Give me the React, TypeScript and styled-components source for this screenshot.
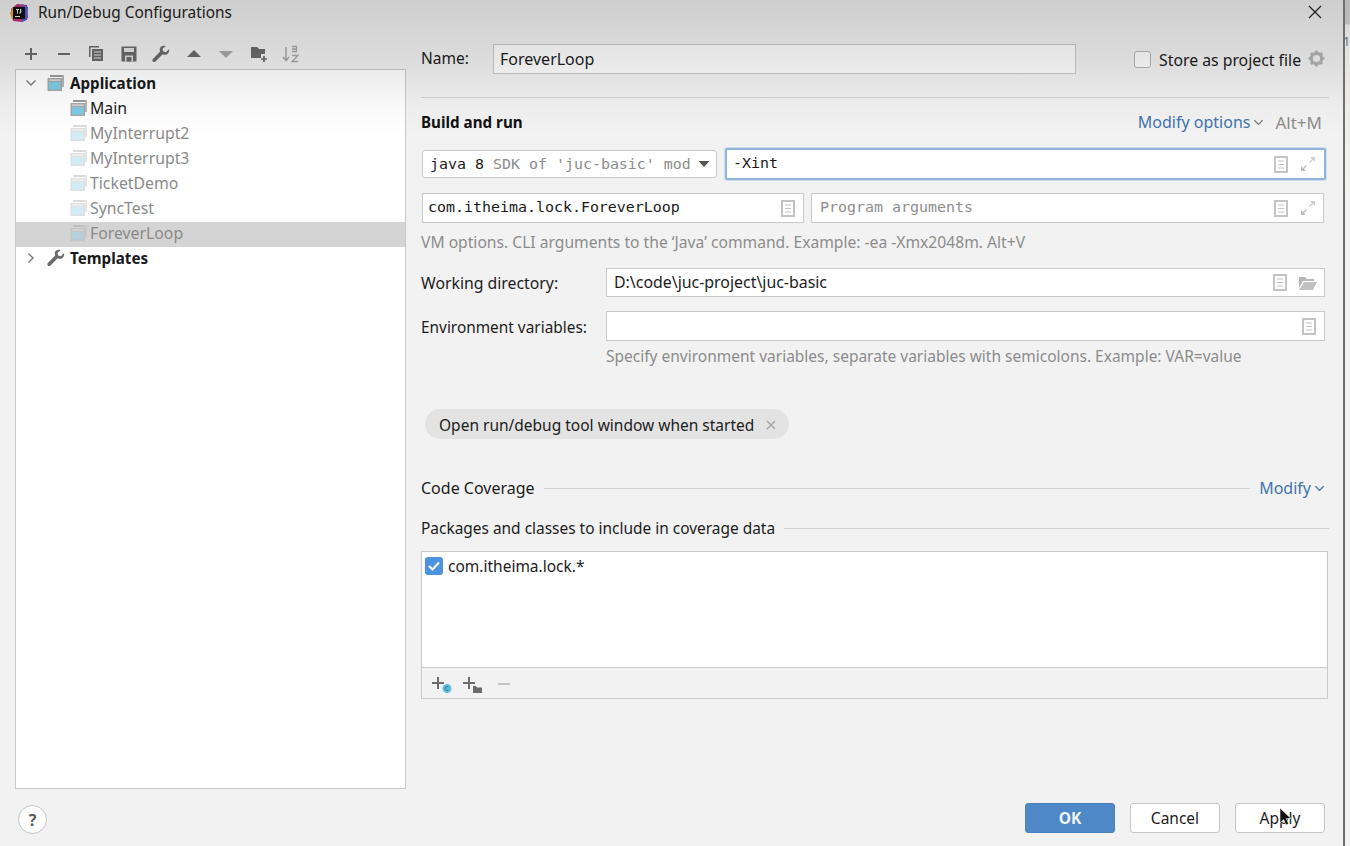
import React from "react";
import styled, { createGlobalStyle } from "styled-components";

const Global = createGlobalStyle`
  html, body { margin: 0; padding: 0; height: 846px; overflow: hidden; background: #f2f2f2; }
  #root { width: 1350px; height: 846px; }
  * { box-sizing: border-box; }
`;

const UI = `"Noto Sans", "Open Sans", "Liberation Sans", sans-serif`;
const MONO = `"DejaVu Sans Mono", "Liberation Mono", monospace`;

const Screen = styled.div`
  position: relative;
  display: flex;
  width: 1350px;
  height: 846px;
  overflow: hidden;
  font-family: ${UI};
  font-size: 15.5px;
  color: #1c1c1c;
`;
const Dialog = styled.div`
  width: 1345px;
  height: 846px;
  background: #f2f2f2;
  border-right: 2px solid #6f6f6f;
  display: flex;
  flex-direction: column;
  flex: none;
`;
const BackStrip = styled.div`
  flex: 1;
  position: relative;
  background: linear-gradient(to bottom, #b9b9b9 0, #bcbcbc 24px, #dcdcdc 25px, #ecebe6 90px, #f4f4f4 200px);
`;
const BackGlyph = styled.span`
  position: absolute;
  left: -2px;
  top: 34px;
  font-size: 12.5px;
  line-height: 16px;
  color: #5f6f80;
`;
const Shade = styled.div`
  position: absolute;
  left: 0;
  top: 0;
  width: 1343px;
  height: 135px;
  pointer-events: none;
  background: linear-gradient(to bottom, rgba(0,0,0,.15) 0, rgba(0,0,0,.09) 60px, rgba(0,0,0,.025) 105px, rgba(0,0,0,0) 135px);
`;
const TitleBar = styled.div`
  height: 26px;
  display: flex;
  align-items: center;
  padding-left: 9px;
  flex: none;
`;
const TitleText = styled.span`
  margin: -2px 0 0 9px;
  font-size: 15.4px;
  color: #222;
  flex: 1;
`;
const CloseBtn = styled.span`
  display: flex;
  margin-right: 21px;
  margin-top: -2px;
`;
const Body = styled.div`
  flex: 1;
  display: flex;
  min-height: 0;
`;
const Left = styled.div`
  width: 406px;
  padding-left: 15px;
  flex: none;
  display: flex;
  flex-direction: column;
`;
const Toolbar = styled.div`
  height: 43px;
  padding-top: 12px;
  display: flex;
  align-items: center;
  flex: none;
`;
const ToolSlot = styled.span`
  width: 32.5px;
  display: flex;
  justify-content: center;
`;
const Tree = styled.div`
  height: 720px;
  width: 391px;
  background: #fff;
  border: 1px solid #c9c9c9;
  padding-top: 2px;
  flex: none;
`;
const TreeRow = styled.div<{ $selected?: boolean; $indent: number; $muted?: boolean; $bold?: boolean }>`
  height: 25px;
  display: flex;
  align-items: center;
  padding: 0 0 4px ${(p) => p.$indent}px;
  background: ${(p) => (p.$selected ? "#d4d4d4" : "transparent")};
  color: ${(p) => (p.$muted ? "#8a8a8a" : "#1a1a1a")};
  font-weight: ${(p) => (p.$bold ? 700 : 400)};
  font-size: ${(p) => (p.$bold ? 15.2 : 15.8)}px;
  white-space: nowrap;
`;
const TreeGlyph = styled.span`
  width: 17px;
  display: flex;
  margin-right: 5px;
`;
const TreeIconSlot = styled.span<{ $muted?: boolean; $gap: number }>`
  display: flex;
  margin-right: ${(p) => p.$gap}px;
  opacity: ${(p) => (p.$muted ? 0.35 : 1)};
`;
const HelpRow = styled.div`
  flex: 1;
  display: flex;
  align-items: flex-start;
  padding: 16px 0 0 3px;
`;
const HelpBtn = styled.button`
  width: 29px;
  height: 29px;
  border-radius: 50%;
  border: 1px solid #c4c4c4;
  background: #fff;
  color: #5a5a5a;
  font: 700 16px ${UI};
  padding: 0;
`;
const Right = styled.div`
  flex: none;
  width: 923px;
  padding: 18px 0 0 15px;
  display: flex;
  flex-direction: column;
`;
const Row = styled.div<{ $h: number; $mt?: number }>`
  display: flex;
  align-items: center;
  height: ${(p) => p.$h}px;
  margin-top: ${(p) => p.$mt ?? 0}px;
  flex: none;
`;
const Label = styled.span<{ $w?: number; $ml?: number; $size?: number; $pb?: number; $pt?: number }>`
  width: ${(p) => (p.$w ? `${p.$w}px` : "auto")};
  margin-left: ${(p) => p.$ml ?? 0}px;
  padding-top: ${(p) => p.$pt ?? 0}px;
  padding-bottom: ${(p) => p.$pb ?? 2}px;
  flex: none;
  white-space: nowrap;
  font-size: ${(p) => p.$size ?? 15.5}px;
`;
const Field = styled.div<{ $w: number; $pl?: number }>`
  width: ${(p) => p.$w}px;
  height: 100%;
  border: 1px solid #c8c8c8;
  background: #fff;
  display: flex;
  align-items: center;
  padding: 0 7px 0 ${(p) => p.$pl ?? 7}px;
  flex: none;
`;
const FieldText = styled.span<{ $size?: number }>`
  flex: 1;
  padding-bottom: 1px;
  white-space: nowrap;
  overflow: hidden;
  font-size: ${(p) => p.$size ?? 15.5}px;
`;
const Mono = styled.span<{ $placeholder?: boolean }>`
  flex: 1;
  padding-bottom: 2px;
  font-family: ${MONO};
  font-size: 14.95px;
  color: ${(p) => (p.$placeholder ? "#8e8e8e" : "#1a1a1a")};
  white-space: nowrap;
`;
const SelectBox = styled.div`
  width: 295px;
  height: 28px;
  border: 1px solid #c8c8c8;
  border-radius: 3px;
  background: #fff;
  display: flex;
  align-items: center;
  padding: 0 6px 0 7px;
  font-family: ${MONO};
  font-size: 14.95px;
  flex: none;
  white-space: nowrap;
  overflow: hidden;
`;
const Muted = styled.span`
  color: #8c8c8c;
  margin-left: 9px;
  flex: 1;
`;
const FocusField = styled.div`
  width: 601px;
  height: 32px;
  margin-left: 8px;
  border: 2px solid #8fb4dd;
  box-shadow: 0 0 0 1px #cfdeef;
  border-radius: 2px;
  background: #fff;
  display: flex;
  align-items: center;
  padding: 0 8px 0 6px;
  flex: none;
`;
const IconGap = styled.span`
  display: flex;
  margin-left: 11px;
`;
const Spacer = styled.span<{ $w: number }>`
  width: ${(p) => p.$w}px;
  flex: none;
`;
const CheckEmpty = styled.span`
  width: 17px;
  height: 17px;
  border: 1px solid #b5b5b5;
  border-radius: 3px;
  background: #fff;
  flex: none;
`;
const Divider = styled.div`
  height: 1px;
  background: #d2d2d2;
  margin-top: 23px;
  flex: none;
`;
const Section = styled.span`
  font-weight: 700;
  font-size: 15.2px;
  color: #111;
  flex: 1;
`;
const LinkText = styled.span`
  color: #3f74ad;
  font-size: 16px;
  white-space: nowrap;
`;
const Shortcut = styled.span`
  color: #8c8c8c;
  font-size: 17px;
  margin-left: 11px;
  margin-right: 7px;
`;
const Hint = styled.div<{ $ml?: number; $mt: number; $size: number }>`
  color: #8c8c8c;
  font-size: ${(p) => p.$size}px;
  line-height: 20px;
  height: 20px;
  margin-left: ${(p) => p.$ml ?? 0}px;
  margin-top: ${(p) => p.$mt}px;
  white-space: nowrap;
  flex: none;
`;
const Chip = styled.div`
  width: 364px;
  height: 30px;
  margin: 43px 0 0 4px;
  border-radius: 15px;
  background: #e3e3e3;
  display: flex;
  align-items: center;
  padding: 1px 13px 0 14px;
  justify-content: space-between;
  flex: none;
  font-size: 15.5px;
`;
const Titled = styled.div<{ $mt: number; $pr?: number }>`
  display: flex;
  align-items: center;
  height: 20px;
  margin-top: ${(p) => p.$mt}px;
  padding-right: ${(p) => p.$pr ?? 0}px;
  flex: none;
  white-space: nowrap;
`;
const TitledName = styled.span<{ $size: number }>`
  font-size: ${(p) => p.$size}px;
`;
const TitledLine = styled.span`
  flex: 1;
  height: 1px;
  background: #d2d2d2;
  margin: 0 9px;
`;
const TitledLineEnd = styled(TitledLine)`
  margin-right: 0;
`;
const ListBox = styled.div`
  margin-top: 13px;
  height: 148px;
  width: 907px;
  border: 1px solid #c9c9c9;
  display: flex;
  flex-direction: column;
  flex: none;
`;
const ListArea = styled.div`
  height: 116px;
  background: #fff;
  border-bottom: 1px solid #c9c9c9;
  padding: 4px 0 0 3px;
  flex: none;
`;
const ListItem = styled.div`
  display: flex;
  align-items: center;
  height: 20px;
  gap: 5px;
  font-size: 15.5px;
`;
const CheckOn = styled.span`
  width: 18px;
  height: 18px;
  border-radius: 3px;
  background: #4d94de;
  display: flex;
  align-items: center;
  justify-content: center;
  flex: none;
`;
const ListTools = styled.div`
  flex: 1;
  display: flex;
  align-items: center;
  padding: 4px 0 0 9px;
  gap: 9px;
`;
const MinusIcon = styled.svg`
  margin-left: 4px;
`;
const Buttons = styled.div`
  margin-top: 104px;
  padding-right: 4px;
  display: flex;
  justify-content: flex-end;
  gap: 15px;
  flex: none;
`;
const Btn = styled.button<{ $primary?: boolean }>`
  width: 90px;
  height: 30px;
  border-radius: 3px;
  border: 1px solid ${(p) => (p.$primary ? "#4a82bd" : "#c6c6c6")};
  background: ${(p) => (p.$primary ? "#4f88c7" : "#fff")};
  color: ${(p) => (p.$primary ? "#f0f5fb" : "#1c1c1c")};
  font: ${(p) => (p.$primary ? 700 : 400)} 15.5px ${UI};
  padding: 0;
`;
const Cursor = styled.svg`
  position: absolute;
  left: 1279px;
  top: 807px;
`;

const C = "#6b6b6b";
const Tool = ({ children, w = 18, h = 18 }: { children: React.ReactNode; w?: number; h?: number }) => (
  <svg width={w} height={h} viewBox={`0 0 ${w} ${h}`}>{children}</svg>
);

const AppIcon = () => (
  <svg width="18" height="18" viewBox="0 0 18 18">
    <rect x="3" y="1" width="14" height="2" fill="#9a9a9a" />
    <rect x="15" y="1" width="2" height="12" fill="#b5b5b5" />
    <rect x="0.5" y="4" width="14.5" height="13" fill="#a8a8a8" />
    <rect x="2" y="8" width="11.5" height="7.5" fill="#7dcbe6" />
    <rect x="2" y="5.5" width="11.5" height="1.2" fill="#e4e4e4" />
  </svg>
);
const Doc = () => (
  <svg width="15" height="17" viewBox="0 0 15 17">
    <rect x="1" y="1" width="12" height="15" fill="#fff" stroke="#c4c4c4" strokeWidth="2" />
    <path d="M4 5h6M4 8.5h6M4 12h6" stroke="#c4c4c4" strokeWidth="1.2" />
  </svg>
);
const Expand = () => (
  <svg width="16" height="16" viewBox="0 0 16 16" fill="none">
    <path d="M10 1h5v5l-2-2-3 3-1-1 3-3z" fill="#cfcfcf" />
    <path d="M1 10v5h5l-2-2 3-3-1-1-3 3z" fill="#bdbdbd" />
  </svg>
);
const Wrench = () => (
  <svg width="18" height="18" viewBox="0 0 18 18">
    <path d="M17 4.2l-3.2 3-2.6-.7-.7-2.6L13.6.9c-2.2-.7-4.6 0-5.5 1.9-.6 1.3-.5 2.7.1 3.8L.9 13.9c-.8.8-.7 1.9 0 2.6.8.8 1.9.7 2.6 0l7.2-7.2c1.2.7 2.7.7 4 .1 1.9-1 2.9-3 2.3-5.2z" fill={C} />
  </svg>
);
const Chevron = ({ dir, color = "#7a7a7a", size = 12 }: { dir: "down" | "right"; color?: string; size?: number }) => (
  <svg width={size} height={size} viewBox="0 0 12 12" fill="none">
    <path d={dir === "down" ? "M1.5 3.5L6 8l4.5-4.5" : "M3.5 1.5L8 6l-4.5 4.5"} stroke={color} strokeWidth="1.4" />
  </svg>
);

export default function App() {
  return (
    <Screen>
      <Global />
      <Dialog>
        <TitleBar>
          <svg width="20" height="20" viewBox="0 0 20 20">
            <path d="M2 6L8 1l10 1 1 13-6 4-9-1z" fill="#c2307e" />
            <path d="M1 10l3-6 3 12-4 0z" fill="#f0a030" />
            <path d="M13 1l6 3-1 13-5 2z" fill="#5a5fd8" />
            <rect x="4" y="4" width="12" height="12" fill="#111" />
            <rect x="6" y="13" width="5" height="1" fill="#eee" />
            <path d="M7 6h3v1H9v3.6H8V7H7zM11 6h1.2v3.6c0 .9-1.4 1.1-2.2.6l.4-.8c.3.2.6.2.6-.1z" fill="#eee" />
          </svg>
          <TitleText>Run/Debug Configurations</TitleText>
          <CloseBtn>
            <svg width="14" height="14" viewBox="0 0 14 14">
              <path d="M1 1l12 12M13 1L1 13" stroke="#222" strokeWidth="1.2" />
            </svg>
          </CloseBtn>
        </TitleBar>
        <Body>
          <Left>
            <Toolbar>
              <ToolSlot><Tool w={14} h={14}><path d="M1 7h12M7 1v12" stroke={C} strokeWidth="2" /></Tool></ToolSlot>
              <ToolSlot><Tool w={14} h={14}><path d="M1 7h12" stroke={C} strokeWidth="2" /></Tool></ToolSlot>
              <ToolSlot>
                <Tool w={16} h={17}>
                  <path d="M1 1h10v1.6H2.5V12H1z" fill={C} />
                  <rect x="4" y="4" width="11" height="12" fill={C} />
                  <path d="M6 7h7M6 10h7M6 13h7" stroke="#e8e8e8" strokeWidth="1" />
                </Tool>
              </ToolSlot>
              <ToolSlot>
                <Tool w={16} h={16}>
                  <path d="M0.5 0.5h15v15H0.5z" fill={C} />
                  <rect x="3" y="2" width="10" height="4" fill="#e4e4e4" />
                  <rect x="4" y="9.5" width="8" height="6" fill="#e4e4e4" />
                  <rect x="5.5" y="11" width="5" height="4.5" fill={C} />
                </Tool>
              </ToolSlot>
              <ToolSlot><Wrench /></ToolSlot>
              <ToolSlot><Tool w={16} h={10}><path d="M8 1l7 7H1z" fill={C} /></Tool></ToolSlot>
              <ToolSlot><Tool w={16} h={10}><path d="M1 2h14L8 9z" fill="#a8a8a8" /></Tool></ToolSlot>
              <ToolSlot>
                <Tool w={18} h={17}>
                  <path d="M1 2h6l2 2h6v5h-4v4H1z" fill={C} />
                  <path d="M11 14h6M14 11v6" stroke={C} strokeWidth="1.7" />
                </Tool>
              </ToolSlot>
              <ToolSlot>
                <Tool w={18} h={18}>
                  <path d="M4 2v13M1 12l3 3.5L7 12" stroke="#a8a8a8" strokeWidth="1.5" fill="none" />
                  <path d="M10 1.5h4.5V7M10 4h4.5M10 6.5h4.5M10 10.5h6l-6 6h6" stroke="#a8a8a8" strokeWidth="1.3" fill="none" />
                </Tool>
              </ToolSlot>
            </Toolbar>
            <Tree>
              <TreeRow $indent={9} $bold>
                <TreeGlyph><Chevron dir="down" /></TreeGlyph>
                <TreeIconSlot $gap={5}><AppIcon /></TreeIconSlot>
                Application
              </TreeRow>
              <TreeRow $indent={54}>
                <TreeIconSlot $gap={2}><AppIcon /></TreeIconSlot>
                Main
              </TreeRow>
              {["MyInterrupt2", "MyInterrupt3", "TicketDemo", "SyncTest"].map((n) => (
                <TreeRow key={n} $indent={54} $muted>
                  <TreeIconSlot $muted $gap={2}><AppIcon /></TreeIconSlot>
                  {n}
                </TreeRow>
              ))}
              <TreeRow $indent={54} $muted $selected>
                <TreeIconSlot $muted $gap={2}><AppIcon /></TreeIconSlot>
                ForeverLoop
              </TreeRow>
              <TreeRow $indent={9} $bold>
                <TreeGlyph><Chevron dir="right" /></TreeGlyph>
                <TreeIconSlot $gap={5}><Wrench /></TreeIconSlot>
                Templates
              </TreeRow>
            </Tree>
            <HelpRow><HelpBtn>?</HelpBtn></HelpRow>
          </Left>
          <Right>
            <Row $h={30}>
              <Label $w={72}>Name:</Label>
              <Field $w={583} $pl={6}><FieldText $size={16}>ForeverLoop</FieldText></Field>
              <Spacer $w={58} />
              <CheckEmpty />
              <Label $ml={8} $size={15.8} $pb={0} $pt={2}>Store as project file</Label>
              <Spacer $w={7} />
              <svg width="18" height="18" viewBox="0 0 18 18">
                <circle cx="8.5" cy="8.5" r="5.2" fill="none" stroke="#b4b4b4" strokeWidth="3.2" />
                <path d="M8.5 0.5v3M8.5 13.5v3M0.5 8.5h3M13.5 8.5h3M2.8 2.8l2.1 2.1M12.1 12.1l2.1 2.1M14.2 2.8l-2.1 2.1M4.9 12.1l-2.1 2.1" stroke="#b4b4b4" strokeWidth="2.6" />
              </svg>
            </Row>
            <Divider />
            <Row $h={20} $mt={14}>
              <Section>Build and run</Section>
              <LinkText>Modify options</LinkText>
              <Spacer $w={3} />
              <Chevron dir="down" size={11} />
              <Shortcut>Alt+M</Shortcut>
            </Row>
            <Row $h={32} $mt={16}>
              <Spacer $w={1} />
              <SelectBox>
                java 8<Muted>SDK of 'juc-basic' mod</Muted>
                <svg width="12" height="8" viewBox="0 0 12 8"><path d="M0.5 1h11L6 7z" fill="#555" /></svg>
              </SelectBox>
              <FocusField>
                <Mono>-Xint</Mono>
                <Doc />
                <IconGap><Expand /></IconGap>
              </FocusField>
            </Row>
            <Row $h={30} $mt={13}>
              <Spacer $w={1} />
              <Field $w={382} $pl={5}>
                <Mono>com.itheima.lock.ForeverLoop</Mono>
                <Doc />
              </Field>
              <Spacer $w={7} />
              <Field $w={513} $pl={8}>
                <Mono $placeholder>Program arguments</Mono>
                <Doc />
                <IconGap><Expand /></IconGap>
              </Field>
            </Row>
            <Hint $mt={9} $size={15.65}>VM options. CLI arguments to the ‘Java’ command. Example: -ea -Xmx2048m. Alt+V</Hint>
            <Row $h={29} $mt={16}>
              <Label $w={185} $size={15.8} $pb={0}>Working directory:</Label>
              <Field $w={719}>
                <FieldText $size={15.9}>D:\code\juc-project\juc-basic</FieldText>
                <Doc />
                <IconGap>
                  <svg width="18" height="14" viewBox="0 0 18 14">
                    <path d="M0 1h6l2 2h7v2H4L0 12z" fill="#b8b8b8" />
                    <path d="M5 6h13l-4 8H0z" fill="#c2c2c2" />
                  </svg>
                </IconGap>
              </Field>
            </Row>
            <Row $h={30} $mt={14}>
              <Label $w={185} $size={15.4} $pb={0} $pt={2}>Environment variables:</Label>
              <Field $w={719}>
                <FieldText />
                <Doc />
              </Field>
            </Row>
            <Hint $ml={185} $mt={5} $size={15.5}>Specify environment variables, separate variables with semicolons. Example: VAR=value</Hint>
            <Chip>
              <span>Open run/debug tool window when started</span>
              <svg width="10" height="10" viewBox="0 0 10 10"><path d="M1 1l8 8M9 1L1 9" stroke="#a0a0a0" strokeWidth="1.2" /></svg>
            </Chip>
            <Titled $mt={39} $pr={4}>
              <TitledName $size={16}>Code Coverage</TitledName>
              <TitledLine />
              <LinkText>Modify</LinkText>
              <Spacer $w={3} />
              <Chevron dir="down" size={11} color="#3f74ad" />
            </Titled>
            <Titled $mt={20}>
              <TitledName $size={15.45}>Packages and classes to include in coverage data</TitledName>
              <TitledLineEnd />
            </Titled>
            <ListBox>
              <ListArea>
                <ListItem>
                  <CheckOn>
                    <svg width="12" height="10" viewBox="0 0 12 10"><path d="M1 5l3.5 3.5L11 1.5" stroke="#fff" strokeWidth="2" fill="none" /></svg>
                  </CheckOn>
                  com.itheima.lock.*
                </ListItem>
              </ListArea>
              <ListTools>
                <svg width="22" height="18" viewBox="0 0 22 18">
                  <path d="M1 7h12M7 1v12" stroke={C} strokeWidth="2" />
                  <circle cx="16" cy="12.5" r="4.5" fill="#62c0dc" />
                  <path d="M17.6 11a2 2 0 1 0 0 3" stroke="#2f6f86" fill="none" />
                </svg>
                <svg width="22" height="18" viewBox="0 0 22 18">
                  <path d="M1 7h12M7 1v12" stroke={C} strokeWidth="2" />
                  <path d="M11 10h3l1 1.5h5V17h-9z" fill={C} />
                </svg>
                <MinusIcon width="14" height="14" viewBox="0 0 14 14"><path d="M1 6h12" stroke="#c4c4c4" strokeWidth="2" /></MinusIcon>
              </ListTools>
            </ListBox>
            <Buttons>
              <Btn $primary>OK</Btn>
              <Btn>Cancel</Btn>
              <Btn>Apply</Btn>
            </Buttons>
          </Right>
        </Body>
      </Dialog>
      <BackStrip><BackGlyph>1</BackGlyph></BackStrip>
      <Shade />
      <Cursor width="13" height="20" viewBox="0 0 13 20">
        <path d="M1 1v15l3.6-3.4L7 18l2.6-1.2-2.4-5.2H12z" fill="#111" stroke="#fff" strokeWidth=".6" />
      </Cursor>
    </Screen>
  );
}
